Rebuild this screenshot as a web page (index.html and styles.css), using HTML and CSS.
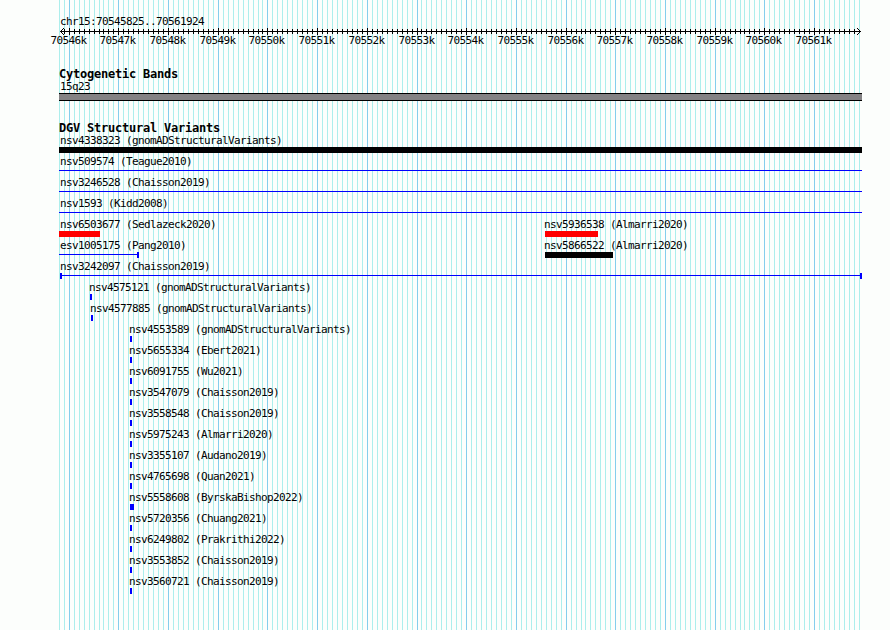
FILE: index.html
```html
<!DOCTYPE html>
<html lang="en">
<head>
    <meta charset="UTF-8">
    <meta name="viewport" content="width=device-width, initial-scale=1.0">
    <title>chr15:70545825..70561924</title>
    <link rel="stylesheet" href="styles.css">
</head>
<body>
    <div class="panel">
        <svg class="grid" id="grid" width="890" height="630"></svg>
        <div class="tracks">
            <div class="region">chr15:70545825..70561924</div>
            <svg class="ruler" id="ruler" width="890" height="22"></svg>

            <h2 class="track-title bands-title">Cytogenetic Bands</h2>
            <div class="band-label">15q23</div>
            <div class="band"></div>

            <h2 class="track-title variants-title">DGV Structural Variants</h2>
            <div id="variants"></div>
        </div>
    </div>

    <script src="script.js"></script>
</body>
</html>
```
FILE: styles.css
```css
body {
    margin: 0;
    background: #fcfefc;
    color: #000;
    font-family: "DejaVu Sans Mono", monospace;
    font-size: 11px;
    letter-spacing: -0.62px;
}

.panel {
    display: grid;
    width: 890px;
    height: 630px;
    overflow: hidden;
}

.grid,
.tracks {
    grid-area: 1 / 1;
}

.grid,
.ruler {
    display: block;
    shape-rendering: crispEdges;
}

.minor {
    fill: #aceeec;
}

.major {
    fill: #84ceec;
}

.region {
    height: 13px;
    line-height: 13px;
    padding: 15px 0 0 60px;
}

.ruler {
    overflow: visible;
}

.arrow {
    fill: none;
    stroke: #000;
}

.track-title {
    margin: 0;
    padding-left: 59px;
    height: 12px;
    line-height: 13px;
    font-size: 12px;
    font-weight: bold;
    letter-spacing: -0.22px;
    white-space: pre;
}

.bands-title {
    margin-top: 18px;
}

.variants-title {
    margin-top: 21px;
}

.band-label {
    height: 13px;
    line-height: 13px;
    padding-left: 60px;
}

.band {
    box-sizing: border-box;
    width: 803px;
    height: 8px;
    margin-left: 59px;
    background: #848284;
    border-top: 1px solid #000;
    border-bottom: 1px solid #000;
}

.row {
    display: grid;
    height: 21px;
}

.feature {
    grid-area: 1 / 1;
}

.name {
    height: 13px;
    line-height: 13px;
    white-space: nowrap;
}

.bar {
    box-sizing: border-box;
    height: 6px;
}

.black {
    background: #000;
}

.red {
    background: #f00;
}

.blue {
    background: #00f;
}

.line {
    background: linear-gradient(#00f, #00f) 0 2px / 100% 1px no-repeat;
}

.cap-left {
    border-left: 2px solid #00f;
}

.cap-right {
    border-right: 2px solid #00f;
}
```
FILE: script.js
```js
// [name, label x, bar x, bar width, bar classes]
const rows = [
    [['nsv4338323 (gnomADStructuralVariants)', 60, 59, 803, 'black']],
    [['nsv509574 (Teague2010)', 60, 59, 803, 'line']],
    [['nsv3246528 (Chaisson2019)', 60, 59, 803, 'line']],
    [['nsv1593 (Kidd2008)', 60, 59, 803, 'line']],
    [
        ['nsv6503677 (Sedlazeck2020)', 60, 59, 41, 'red'],
        ['nsv5936538 (Almarri2020)', 544, 545, 53, 'red']
    ],
    [
        ['esv1005175 (Pang2010)', 60, 59, 80, 'line cap-right'],
        ['nsv5866522 (Almarri2020)', 544, 545, 68, 'black']
    ],
    [['nsv3242097 (Chaisson2019)', 60, 60, 802, 'line cap-left cap-right']],
    [['nsv4575121 (gnomADStructuralVariants)', 89, 90, 2, 'blue']],
    [['nsv4577885 (gnomADStructuralVariants)', 90, 91, 2, 'blue']],
    [['nsv4553589 (gnomADStructuralVariants)', 129, 130, 2, 'blue']],
    [['nsv5655334 (Ebert2021)', 129, 130, 2, 'blue']],
    [['nsv6091755 (Wu2021)', 129, 130, 2, 'blue']],
    [['nsv3547079 (Chaisson2019)', 129, 130, 2, 'blue']],
    [['nsv3558548 (Chaisson2019)', 129, 130, 2, 'blue']],
    [['nsv5975243 (Almarri2020)', 129, 130, 2, 'blue']],
    [['nsv3355107 (Audano2019)', 129, 130, 2, 'blue']],
    [['nsv4765698 (Quan2021)', 129, 130, 2, 'blue']],
    [['nsv5558608 (ByrskaBishop2022)', 129, 130, 4, 'blue']],
    [['nsv5720356 (Chuang2021)', 129, 130, 2, 'blue']],
    [['nsv6249802 (Prakrithi2022)', 129, 130, 2, 'blue']],
    [['nsv3553852 (Chaisson2019)', 129, 130, 2, 'blue']],
    [['nsv3560721 (Chaisson2019)', 129, 130, 2, 'blue']]
];

document.getElementById('variants').innerHTML = rows.map(row =>
    '<div class="row">' + row.map(([name, labelX, x, width, type]) =>
        `<div class="feature">
            <div class="name" style="margin-left: ${labelX}px">${name}</div>
            <div class="bar ${type}" style="margin-left: ${x}px; width: ${width}px"></div>
        </div>`
    ).join('') + '</div>'
).join('');

// one line per 100 bp, a major one per 1 kb
const step = 800 / 161;
let minor = '';
let major = '';
let ticks = '';
for (let i = -2; i <= 159; i++) {
    const x = Math.floor(69.2 + i * step);
    if (i % 10 === 0) {
        major += `<rect class="major" x="${x}" y="0" width="1" height="630"/>`;
        ticks += `<rect x="${x}" y="0" width="1" height="7"/>`;
        ticks += `<text x="${x - 18.5}" y="16">${70546 + i / 10}k</text>`;
    } else {
        minor += `<rect class="minor" x="${x}" y="0" width="1" height="630"/>`;
        // the outermost ones are covered by the arrow heads
        if (i > -2 && i < 159) {
            ticks += `<rect x="${x}" y="1" width="1" height="5"/>`;
        }
    }
}
document.getElementById('grid').innerHTML = minor + major;
document.getElementById('ruler').innerHTML =
    '<rect x="60" y="3" width="801" height="1"/>' +
    '<path class="arrow" d="M64 0L60.5 3.5L64 7M857 0L860.5 3.5L857 7"/>' + ticks;
```
